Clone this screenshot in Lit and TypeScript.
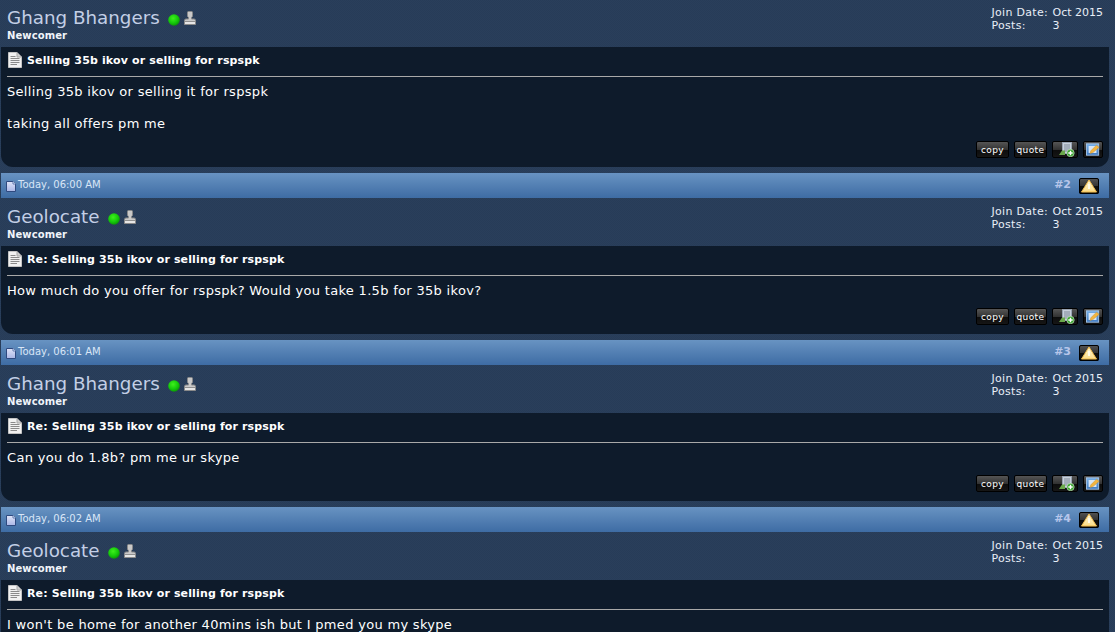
import { LitElement, html, css } from "lit";
import { customElement } from "lit/decorators.js";

interface Post { n: number; date: string; user: string; title: string; lines: string[]; }

const posts: Post[] = [
  { n: 1, date: "", user: "Ghang Bhangers", title: "Selling 35b ikov or selling for rspspk", lines: ["Selling 35b ikov or selling it for rspspk", "", "taking all offers pm me"] },
  { n: 2, date: "Today, 06:00 AM", user: "Geolocate", title: "Re: Selling 35b ikov or selling for rspspk", lines: ["How much do you offer for rspspk? Would you take 1.5b for 35b ikov?"] },
  { n: 3, date: "Today, 06:01 AM", user: "Ghang Bhangers", title: "Re: Selling 35b ikov or selling for rspspk", lines: ["Can you do 1.8b? pm me ur skype"] },
  { n: 4, date: "Today, 06:02 AM", user: "Geolocate", title: "Re: Selling 35b ikov or selling for rspspk", lines: ["I won't be home for another 40mins ish but I pmed you my skype"] },
];

const docIcon = html`<svg class="doc" width="14" height="16" viewBox="0 0 14 16">
  <path d="M.5 .5H9L13.500 5V15.500H.5Z" fill="#f1f1f1" stroke="#c4c4c4"/>
  <path d="M9 .5V5H13.500" fill="#cfcfcf" stroke="#a8a8a8"/>
  <path d="M2.500 4.500H7.500M2.500 6.500H11.500M2.500 8.500H11.500M2.500 10.500H11.500M2.500 12.500H9" stroke="#8a8a8a" fill="none"/>
</svg>`;

const miniDoc = html`<svg class="mini" width="10" height="11" viewBox="0 0 10 11">
  <defs><linearGradient id="m" x1="0" y1="0" x2="0" y2="1"><stop offset="0" stop-color="#dfe4f8"/><stop offset="1" stop-color="#aab6e6"/></linearGradient></defs>
  <path d="M.5 .5H7L9.500 3V10.500H.5Z" fill="url(#m)" stroke="#2f4a80"/>
  <path d="M7 .5V3H9.500" fill="#f5f6fd" stroke="#5d77ad"/>
</svg>`;

const onlineDot = html`<svg class="dot" width="12" height="12" viewBox="0 0 12 12">
  <defs><radialGradient id="g" cx="42%" cy="35%" r="70%"><stop offset="0" stop-color="#3ef01c"/><stop offset=".6" stop-color="#14c80a"/><stop offset="1" stop-color="#0a8a06"/></radialGradient></defs>
  <circle cx="6" cy="6" r="5.800" fill="url(#g)"/>
</svg>`;

const personIcon = html`<svg class="person" width="12" height="14" viewBox="0 0 12 14">
  <path d="M3.500 1.500Q3.500 .5 4.500 .5H7.500Q8.500 .5 8.500 1.500V4.500Q8.500 6 7.500 6.500V8H10Q11.500 8 11.500 9.500V13.500H.5V9.500Q.5 8 2 8H4.500V6.500Q3.500 6 3.500 4.500Z" fill="#c9c9c9" stroke="#8a8a8a"/>
  <rect x="1" y="10" width="10" height="1" fill="#8f8f8f"/>
  <rect x="1" y="11" width="10" height="2" fill="#e6e6e6"/>
</svg>`;

const warnIcon = html`<svg width="18" height="14" viewBox="0 0 18 14">
  <defs><linearGradient id="w" x1="0" y1="0" x2="0" y2="1"><stop offset="0" stop-color="#fff8d8"/><stop offset="1" stop-color="#fbdc86"/></linearGradient></defs>
  <path d="M9 1L16.500 13H1.500Z" fill="url(#w)" stroke="#f1bb4a" stroke-linejoin="round"/>
  <path d="M9 5V10" stroke="#fffbe8" stroke-width="2"/>
</svg>`;

const addIcon = html`<svg width="19" height="15" viewBox="0 0 19 15">
  <rect x="6.500" y=".5" width="9" height="11" fill="#c8d0da" stroke="#98a3b2"/>
  <path d="M8 3H14M8 5H14M8 7H14M8 9H12" stroke="#7f8a99"/>
  <path d="M3 13L6 8.500H9V13Z" fill="#6aa84a"/>
  <circle cx="14.500" cy="11" r="3.700" fill="#35a02a" stroke="#e4f3df" stroke-width=".6"/>
  <path d="M14.500 8.800V13.200M12.300 11H16.700" stroke="#fff" stroke-width="1.400"/>
</svg>`;

const editIcon = html`<svg width="14" height="13" viewBox="0 0 16 14">
  <defs><linearGradient id="e" x1="0" y1="0" x2="0" y2="1"><stop offset="0" stop-color="#79b2ea"/><stop offset="1" stop-color="#3d78c0"/></linearGradient></defs>
  <rect x=".5" y=".5" width="14" height="13" fill="url(#e)" stroke="#a8c8ea"/>
  <rect x="3" y="3" width="9" height="8" fill="#d8e6f5"/>
  <path d="M4.500 11.500L5.500 8.500L12 2L15 4.500L8 10.500Z" fill="#f3b540" stroke="#c98d22" stroke-width=".5"/>
</svg>`;

@customElement("app-root")
export class AppRoot extends LitElement {
  static styles = css`
    :host {
      display: block;
      height: 632px;
      overflow: hidden;
      font-family: "DejaVu Sans", Verdana, sans-serif;
      background-color: #273c58;
      background-image: conic-gradient(rgba(255,255,255,.015) 25%, transparent 0 50%, rgba(255,255,255,.015) 0 75%, transparent 0);
      background-size: 2px 2px;
      color: #fff;
    }
    .list { padding: 0 6px 0 1px; margin-top: -1px; }
    .post { margin-bottom: 6px; }
    .bar {
      height: 25px;
      box-sizing: border-box;
      display: flex;
      align-items: center;
      padding: 0 10px 2px 5px;
      background: linear-gradient(#6893c2, #3e6ca4);
      color: #d9e6f7;
      font-size: 10px;
    }
    .mini { margin-right: 2px; margin-top: 3px; }
    .date { flex: 1; }
    .num { font-weight: bold; font-size: 11px; color: #b7c6ea; margin-right: 8px; }
    .warn {
      width: 20px; height: 16px;
      margin-top: 2px;
      background: linear-gradient(#555 0, #333 50%, #0d0d0d 51%, #111 100%);
      outline: 1px solid #000;
      outline-offset: -1px;
      border-radius: 2px;
      display: flex; align-items: center; justify-content: center;
    }
    .user {
      height: 48px;
      box-sizing: border-box;
      display: flex;
      justify-content: space-between;
      padding: 8px 6px 0 6px;
    }
    .name {
      font-size: 18.3px;
      line-height: 22px;
      color: #c3cfe6;
      display: flex;
      align-items: center;
    }
    .dot { margin: 4px 0 0 8px; }
    .person { margin: 0 0 0 4px; }
    .rank { font-size: 10px; font-weight: bold; letter-spacing: .1px; line-height: 12px; margin-top: 1px; color: #f0f4fa; }
    .meta {
      display: grid;
      grid-template-columns: 61px auto;
      align-content: start;
      font-size: 11px;
      line-height: 13px;
      color: #e8eef7;
      margin-top: -1px;
      align-self: flex-start;
    }
    .label { letter-spacing: .3px; }
    .body {
      background: #0e1b2b;
      border-radius: 0 0 12px 12px;
      padding: 0 6px;
    }
    .head {
      display: flex;
      align-items: center;
      gap: 5px;
      height: 30px;
      padding-bottom: 3px;
      box-sizing: border-box;
      border-bottom: 1px solid #a9a9a9;
      font-size: 11px;
      font-weight: bold;
      letter-spacing: .14px;
    }
    .doc { margin-left: 1px; }
    .text {
      font-size: 13px;
      line-height: 16px;
      padding-top: 7px;
      letter-spacing: .31px;
    }
    .line { height: 16px; white-space: pre; }
    .gap { height: 16px; }
    .actions {
      display: flex;
      justify-content: flex-end;
      gap: 5px;
      padding: 9px 0 9px 0;
    }
    .btn {
      height: 17px;
      box-sizing: border-box;
      border: 1px solid #000;
      border-radius: 2px;
      background: linear-gradient(#555 0, #333 50%, #0c0c0c 51%, #161616 100%);
      display: flex; align-items: center; justify-content: center;
      font-size: 9px;
      letter-spacing: .4px;
      color: #fff;
    }
    .t { width: 33px; }
    .i { width: 26px; }
    .e { width: 20px; }
  `;

  renderPost(p: Post) {
    return html`<div class="post">
      ${p.date ? html`<div class="bar">${miniDoc}<span class="date">${p.date}</span><span class="num">#${p.n}</span><span class="warn">${warnIcon}</span></div>` : ""}
      <div class="user">
        <div>
          <div class="name">${p.user}${onlineDot}${personIcon}</div>
          <div class="rank">Newcomer</div>
        </div>
        <div class="meta"><span class="label">Join Date:</span><span>Oct 2015</span><span class="label">Posts:</span><span>3</span></div>
      </div>
      <div class="body">
        <div class="head">${docIcon}<span>${p.title}</span></div>
        <div class="text">${p.lines.map((l) => (l ? html`<div class="line">${l}</div>` : html`<div class="gap"></div>`))}</div>
        <div class="actions">
          <span class="btn t">copy</span><span class="btn t">quote</span>
          <span class="btn i">${addIcon}</span><span class="btn e">${editIcon}</span>
        </div>
      </div>
    </div>`;
  }

  render() {
    return html`<div class="list">${posts.map((p) => this.renderPost(p))}</div>`;
  }
}
